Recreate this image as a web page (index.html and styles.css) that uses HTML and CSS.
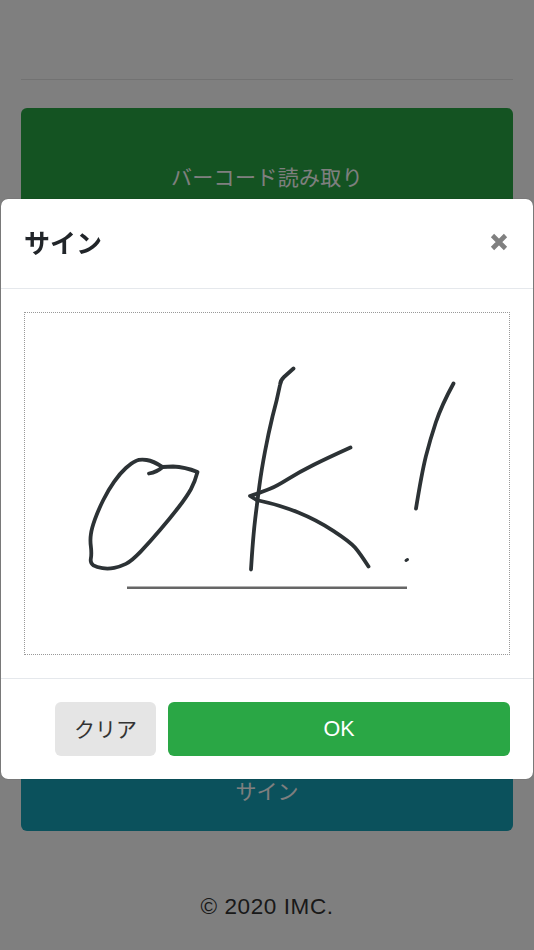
FILE: index.html
```html
<!DOCTYPE html>
<html lang="ja">
<head>
<meta charset="utf-8">
<title>サイン</title>
<link rel="stylesheet" href="styles.css">
</head>
<body>
<main class="page">
  <hr class="rule">
  <button class="btn btn-scan" type="button">バーコード読み取り</button>
  <button class="btn btn-sign" type="button">サイン</button>
  <footer class="copyright">© 2020 IMC.</footer>
</main>
<div class="backdrop"></div>
<section class="modal" role="dialog" aria-label="サイン">
  <header class="modal-header">
    <h2 class="modal-title">サイン</h2>
    <button class="close" type="button" aria-label="閉じる">
      <svg class="close-icon" viewBox="0 0 18 18" width="18" height="18"><path d="M2.5 2.5L15.5 15.5M15.5 2.5L2.5 15.5"/></svg>
    </button>
  </header>
  <div class="modal-body">
    <div class="canvas">
      <svg class="signature" viewBox="25 313 484 341" width="484" height="341">
        <path d="M149 473.5Q157 472 162.7 467Q153.3 461 146.6 460Q140 459 135.9 460.9Q131.7 462.7 125.9 468Q120 473.3 114.2 481.7Q108.3 490 103.3 500Q98.3 510 95 519.2Q91.7 528.3 90.9 534.2Q90 540 90.9 546.7Q91.7 553.3 90.9 558.3Q90 563.3 93.4 565.3Q96.7 567.3 102.5 568.2Q108.3 569 114.2 567.9Q120 566.7 125.9 563.9Q131.7 561 140.9 551.4Q150 541.7 160 530Q170 518.3 178.4 507.5Q186.7 496.7 190.9 489.2Q195 481.7 197.5 472Q185 467 173 466.5Q168 466.5 162.7 467"/>
        <path d="M293.5 368.5L284 377Q280.5 380 280 385Q277 400 272.5 416.5Q268.5 433 265 451.5Q261.5 470 259.5 485Q257.5 500 255.25 518.5Q253 537 251 569.5"/>
        <path d="M350.5 447.5Q326.7 458.3 313.3 465Q300 471.7 288.3 478.8Q276.7 486 270 488.8Q263.3 491.7 250 496L256.5 500Q280 505 298.3 512.5Q316.7 520 333.3 530.8Q350 541.7 355 547.5Q360 553.3 368.5 566.5"/>
        <path d="M453.5 383.5Q441.7 405 435.8 422.5Q430 440 425.8 456.6Q421.7 473.3 416 508.5"/>
        <path class="dot" d="M406 560.5L407.5 559.5"/>
        <path class="baseline" d="M127 587.7H407"/>
      </svg>
    </div>
  </div>
  <footer class="modal-footer">
    <button class="action action-clear" type="button">クリア</button>
    <button class="action action-ok" type="button">OK</button>
  </footer>
</section>
</body>
</html>
```
FILE: styles.css
```css
* { box-sizing: border-box; }
html, body { margin: 0; height: 100%; }
body {
  background: #fff;
  color: #333;
  font-family: "Liberation Sans", "Noto Sans CJK JP", sans-serif;
  overflow: hidden;
}
.page {
  display: flex;
  flex-direction: column;
  padding: 79px 21px 0;
}
.rule {
  width: 100%;
  margin: 0 0 28px;
  border: 0;
  border-top: 1px solid rgba(0, 0, 0, .1);
}
.btn {
  display: block;
  width: 100%;
  border: 0;
  border-radius: 6px;
  color: #fff;
  font: 21px/1.5 "Noto Sans CJK JP", sans-serif;
}
.btn-scan { height: 138px; background: #28a745; letter-spacing: .35px; }
.btn-sign { height: 80px; margin-top: 505px; background: #17a2b8; }
.copyright {
  margin-top: 62px;
  text-align: center;
  font-size: 22.5px;
  line-height: 28px;
  letter-spacing: .6px;
}
.backdrop {
  position: fixed;
  inset: 0;
  background: rgba(0, 0, 0, .5);
}
.modal {
  position: fixed;
  top: 199px;
  left: 1px;
  width: 532px;
  height: 580px;
  display: flex;
  flex-direction: column;
  background: #fff;
  border-radius: 7px;
  box-shadow: 0 0 1px rgba(0, 0, 0, .5);
}
.modal-header {
  display: flex;
  align-items: center;
  justify-content: space-between;
  height: 90px;
  padding: 0 25px 4px 23px;
  border-bottom: 1px solid #e5e8ec;
}
.modal-title {
  margin: 0;
  color: #212529;
  font: 700 26px/1.5 "Noto Sans CJK JP", sans-serif;
}
.close {
  display: flex;
  padding: 0;
  border: 0;
  background: none;
}
.close-icon {
  fill: none;
  stroke: #808080;
  stroke-width: 4.6;
}
.modal-body {
  flex: 1;
  padding: 23px;
}
.canvas {
  width: 486px;
  height: 343px;
  border: 1px dotted #999;
}
.signature {
  display: block;
  fill: none;
  stroke: #2c3235;
  stroke-width: 3.8;
  stroke-linecap: round;
  stroke-linejoin: round;
}
.signature .dot { stroke-width: 3; }
.signature .baseline {
  stroke: #666;
  stroke-width: 2.6;
  stroke-linecap: butt;
}
.modal-footer {
  display: flex;
  justify-content: flex-end;
  gap: 12px;
  height: 101px;
  padding: 23px;
  border-top: 1px solid #e5e8ec;
}
.action {
  height: 54px;
  border: 0;
  border-radius: 6px;
  font: 21px/1.5 "Noto Sans CJK JP", sans-serif;
}
.action-clear { width: 101px; padding: 0; background: #e5e5e5; color: #333; }
.action-ok { width: 342px; background: #2aa745; color: #fff; font-family: "Liberation Sans", sans-serif; font-size: 21.5px; padding-top: 2px; }
```
